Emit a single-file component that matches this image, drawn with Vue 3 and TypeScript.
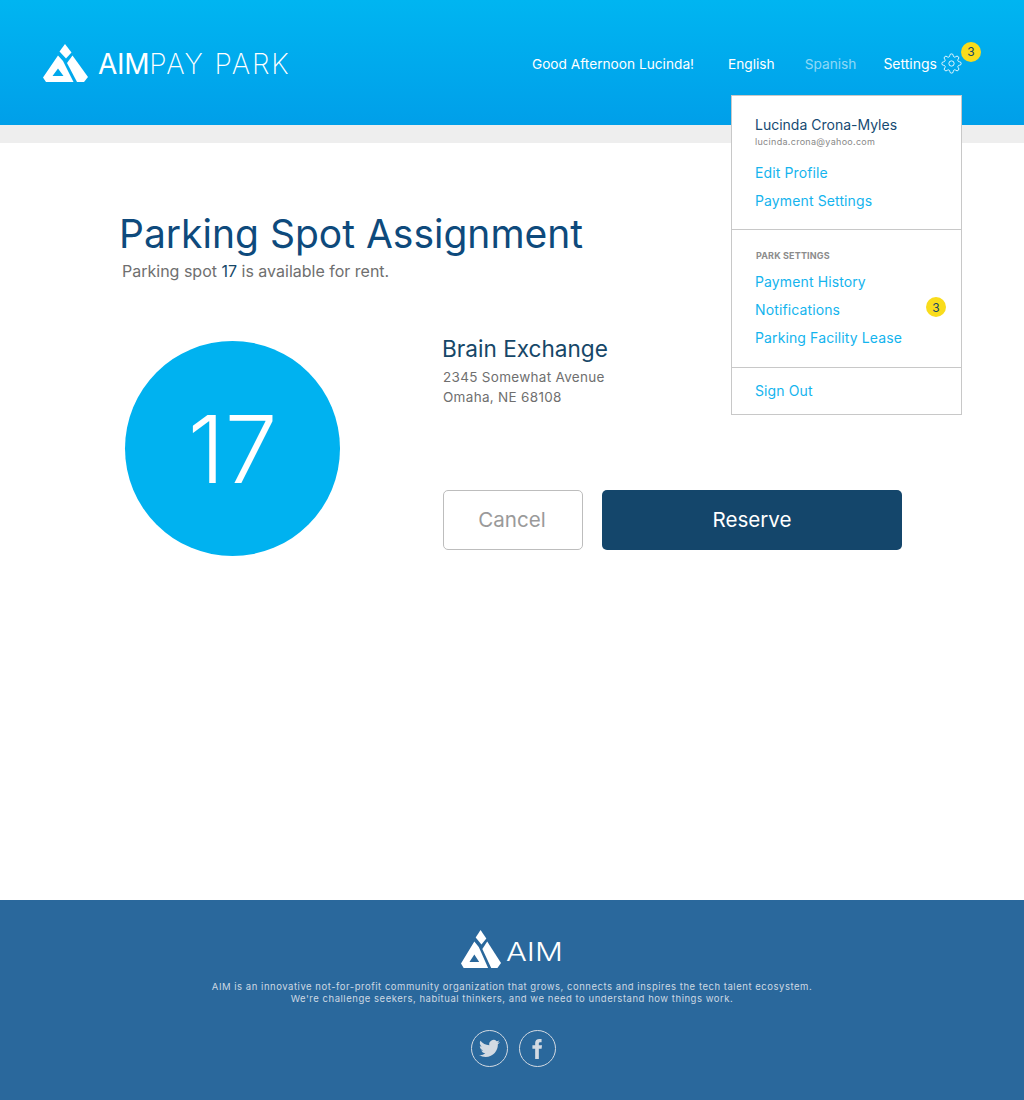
<template>
  <div class="page">
    <header class="topbar">
      <div class="brand">
        <svg class="mark" viewBox="0 0 45 38" width="45" height="38">
          <path fill="#fff" d="M22 0 28.500 8.500 23 14.500 16.500 7.500Z" />
          <path fill="#fff" d="M29.500 11.500 45 33 41 38 34 38 24 19Z" />
          <path fill="#fff" fill-rule="evenodd" d="M15 11.500 20 17 30.500 38 3 38 0 33.500ZM15 24.500 9.500 32 20.500 32Z" />
        </svg>
        <span class="brand-name"><b>AIM</b>PAY PARK</span>
      </div>
      <nav class="nav">
        <span class="greeting">Good Afternoon Lucinda!</span>
        <a class="lang">English</a>
        <a class="lang muted">Spanish</a>
        <a class="settings">
          Settings
          <svg class="gear" viewBox="0 0 24 24" width="21" height="21" fill="none" stroke="#fff" stroke-width="1">
            <circle cx="12" cy="12" r="3" />
            <path d="M19.400 15a1.650 1.650 0 0 0 .33 1.820l.06.06a2 2 0 0 1 0 2.830 2 2 0 0 1-2.830 0l-.06-.06a1.650 1.650 0 0 0-1.820-.33 1.650 1.650 0 0 0-1 1.510V21a2 2 0 0 1-2 2 2 2 0 0 1-2-2v-.09A1.650 1.650 0 0 0 9 19.400a1.650 1.650 0 0 0-1.820.33l-.06.06a2 2 0 0 1-2.830 0 2 2 0 0 1 0-2.830l.06-.06a1.650 1.650 0 0 0 .33-1.820 1.650 1.650 0 0 0-1.510-1H3a2 2 0 0 1-2-2 2 2 0 0 1 2-2h.09A1.650 1.650 0 0 0 4.600 9a1.650 1.650 0 0 0-.33-1.820l-.06-.06a2 2 0 0 1 0-2.830 2 2 0 0 1 2.830 0l.06.06a1.650 1.650 0 0 0 1.820.33H9a1.650 1.650 0 0 0 1-1.510V3a2 2 0 0 1 2-2 2 2 0 0 1 2 2v.09a1.650 1.650 0 0 0 1 1.510 1.650 1.650 0 0 0 1.820-.33l.06-.06a2 2 0 0 1 2.830 0 2 2 0 0 1 0 2.830l-.06.06a1.650 1.650 0 0 0-.33 1.820V9a1.650 1.650 0 0 0 1.510 1H21a2 2 0 0 1 2 2 2 2 0 0 1-2 2h-.09a1.650 1.650 0 0 0-1.510 1z" />
          </svg>
          <span class="badge top-badge">{{ alertCount }}</span>
        </a>
      </nav>
      <div class="menu">
        <section class="menu-section first">
          <div class="menu-user">Lucinda Crona-Myles</div>
          <div class="menu-email">lucinda.crona@yahoo.com</div>
          <a class="menu-link edit">Edit Profile</a>
          <a class="menu-link">Payment Settings</a>
        </section>
        <section class="menu-section second">
          <div class="menu-head">PARK SETTINGS</div>
          <a class="menu-link">Payment History</a>
          <a class="menu-link with-badge">Notifications <span class="badge">{{ alertCount }}</span></a>
          <a class="menu-link">Parking Facility Lease</a>
        </section>
        <section class="menu-section third">
          <a class="menu-link">Sign Out</a>
        </section>
      </div>
    </header>
    <div class="strip"></div>

    <main class="content">
      <h1>Parking Spot Assignment</h1>
      <p class="lead">Parking spot <strong>{{ spot }}</strong> is available for rent.</p>
      <div class="detail">
        <div class="spot-circle">{{ spot }}</div>
        <div class="info">
          <h2>Brain Exchange</h2>
          <p class="address">2345 Somewhat Avenue<br />Omaha, NE 68108</p>
          <div class="actions">
            <button class="btn cancel" type="button">Cancel</button>
            <button class="btn reserve" type="button">Reserve</button>
          </div>
        </div>
      </div>
    </main>

    <footer class="footer">
      <div class="foot-brand">
        <svg viewBox="0 0 45 38" width="40" height="38" preserveAspectRatio="none">
          <path fill="#fff" d="M22 0 28.500 8.500 23 14.500 16.500 7.500Z" />
          <path fill="#fff" d="M29.500 11.500 45 33 41 38 34 38 24 19Z" />
          <path fill="#fff" fill-rule="evenodd" d="M15 11.500 20 17 30.500 38 3 38 0 33.500ZM15 24.500 9.500 32 20.500 32Z" />
        </svg>
        <span>AIM</span>
      </div>
      <p class="blurb">
        AIM is an innovative not-for-profit community organization that grows, connects and inspires the tech talent ecosystem.<br />
        We're challenge seekers, habitual thinkers, and we need to understand how things work.
      </p>
      <div class="social">
        <a class="social-btn">
          <svg viewBox="0 0 24 24" width="21" height="21" fill="#d3dae2">
            <path d="M23.953 4.570a10 10 0 01-2.825.775 4.958 4.958 0 002.163-2.723c-.951.555-2.005.959-3.127 1.184a4.920 4.920 0 00-8.384 4.482C7.690 8.095 4.067 6.130 1.640 3.162a4.822 4.822 0 00-.666 2.475c0 1.710.870 3.213 2.188 4.096a4.904 4.904 0 01-2.228-.616v.060a4.923 4.923 0 003.946 4.827 4.996 4.996 0 01-2.212.085 4.936 4.936 0 004.604 3.417 9.867 9.867 0 01-6.102 2.105c-.390 0-.779-.023-1.170-.067a13.995 13.995 0 007.557 2.209c9.053 0 13.998-7.496 13.998-13.985 0-.210 0-.420-.015-.630A9.935 9.935 0 0024 4.590z" />
          </svg>
        </a>
        <a class="social-btn">
          <svg viewBox="0 0 24 24" width="22" height="22" fill="#d3dae2">
            <path d="M14 8V6c0-.9.3-1.500 1.600-1.500H17V1.100C16.700 1 15.600 1 14.400 1 11.800 1 10 2.600 10 5.500V8H7v3.600h3V23h4V11.600h3l.5-3.600z" />
          </svg>
        </a>
      </div>
    </footer>
  </div>
</template>

<script setup lang="ts">
const spot: number = 17
const alertCount: number = 3
</script>

<style scoped>
.page {
  width: 1024px;
  height: 1100px;
  display: flex;
  flex-direction: column;
  font-family: Inter, "Liberation Sans", sans-serif;
  background: #fff;
  overflow: hidden;
}

.topbar {
  position: relative;
  height: 125px;
  flex: none;
  display: flex;
  align-items: center;
  justify-content: space-between;
  padding: 1px 62px 0 43px;
  box-sizing: border-box;
  background: linear-gradient(180deg, #00b5f1 0%, #009fe9 100%);
  color: #fff;
}

.brand {
  display: flex;
  align-items: center;
  gap: 10px;
}

.brand-name {
  font-size: 28px;
  font-weight: 200;
  letter-spacing: 1.9px;
  white-space: nowrap;
  padding-top: 2px;
}

.brand-name b {
  font-weight: 400;
  letter-spacing: -0.3px;
}

.nav {
  display: flex;
  align-items: center;
  font-size: 13.7px;
  white-space: nowrap;
}

.greeting {
  margin-right: 34px;
  padding-top: 2px;
}

.lang {
  margin-right: 30px;
  padding-top: 2px;
}

.lang.muted {
  margin-right: 27px;
  opacity: 0.55;
}

.settings {
  position: relative;
  display: flex;
  align-items: center;
  gap: 4px;
  font-size: 14px;
}

.badge {
  display: flex;
  align-items: center;
  justify-content: center;
  width: 20px;
  height: 20px;
  border-radius: 50%;
  background: #f9dc1c;
  color: #164768;
  font-size: 12px;
}

.top-badge {
  position: absolute;
  top: -11px;
  right: -19px;
}

.menu {
  position: absolute;
  top: 95px;
  left: 731px;
  width: 231px;
  height: 320px;
  box-sizing: border-box;
  background: #fff;
  border: 1px solid #c8c8c8;
  display: flex;
  flex-direction: column;
  z-index: 2;
}

.menu-section {
  padding-left: 23px;
  padding-right: 15px;
  box-sizing: border-box;
  border-bottom: 1px solid #c8c8c8;
}

.menu-section.first {
  height: 134px;
  padding-top: 19px;
}

.menu-section.second {
  height: 138px;
  padding-top: 20px;
}

.menu-section.third {
  height: 46px;
  border-bottom: none;
  padding-top: 8px;
}

.menu-user {
  font-size: 14px;
  line-height: 20px;
  color: #164a72;
}

.menu-email {
  font-size: 9px;
  line-height: 12px;
  letter-spacing: 0.3px;
  color: #888;
  margin-top: 1px;
}

.menu-head {
  font-size: 9px;
  line-height: 12px;
  font-weight: 700;
  letter-spacing: 0.15px;
  color: #8c8c8c;
  margin-bottom: 5px;
  padding-left: 1px;
}

.menu-link {
  display: flex;
  align-items: center;
  justify-content: space-between;
  height: 28px;
  font-size: 14px;
  letter-spacing: 0.12px;
  color: #14b4ee;
}

.menu-link.edit {
  margin-top: 10px;
}

.with-badge .badge {
  margin-bottom: 4px;
}

.strip {
  height: 18px;
  flex: none;
  background: #eee;
}

.content {
  flex: 1;
  padding: 66px 0 0 120px;
}

h1 {
  margin: 0 0 0 -1px;
  font-size: 39px;
  line-height: 50px;
  font-weight: 400;
  color: #0e4a7c;
}

.lead {
  margin: 2px 0 0 2px;
  font-size: 16px;
  line-height: 20px;
  color: #6f6f6f;
}

.lead strong {
  font-weight: 400;
  color: #164768;
}

.detail {
  display: flex;
  margin-top: 60px;
  padding-left: 5px;
}

.spot-circle {
  width: 215px;
  height: 215px;
  flex: none;
  border-radius: 50%;
  background: #00b2f0;
  color: #fff;
  font-size: 94px;
  font-weight: 300;
  display: flex;
  align-items: center;
  justify-content: center;
}

.info {
  margin-left: 102px;
}

h2 {
  margin: -7px 0 0;
  font-size: 22.6px;
  line-height: 30px;
  font-weight: 400;
  color: #164768;
}

.address {
  margin: 3px 0 0 1px;
  font-size: 13.5px;
  line-height: 20px;
  letter-spacing: 0.3px;
  color: #6f6f6f;
}

.actions {
  display: flex;
  margin: 83px 0 0 1px;
  gap: 19px;
}

.btn {
  height: 60px;
  border-radius: 5px;
  font-family: inherit;
  font-size: 20.6px;
  padding: 0 0 2px;
  box-sizing: border-box;
}

.cancel {
  width: 140px;
  background: #fff;
  border: 1.5px solid #bdbdbd;
  color: #9a9a9a;
  padding-right: 2px;
}

.reserve {
  width: 300px;
  background: #14466b;
  border: none;
  color: #fff;
}

.footer {
  height: 200px;
  flex: none;
  background: #2a689c;
  display: flex;
  flex-direction: column;
  align-items: center;
  padding-top: 30px;
  box-sizing: border-box;
}

.foot-brand {
  display: flex;
  align-items: center;
  gap: 5px;
  color: #fff;
  height: 38px;
}

.foot-brand span {
  display: inline-block;
  font-size: 25px;
  font-weight: 300;
  margin-top: 6px;
  margin-right: 11px;
  transform: scaleX(1.24);
  transform-origin: left center;
}

.blurb {
  margin: 13px 0 0;
  text-align: center;
  font-size: 9.5px;
  line-height: 12px;
  letter-spacing: 0.53px;
  color: #cdd8e3;
}

.social {
  display: flex;
  gap: 11px;
  margin-top: 25px;
  padding-left: 2px;
}

.social-btn {
  width: 37px;
  height: 37px;
  box-sizing: border-box;
  border: 1.5px solid #d3dae2;
  border-radius: 50%;
  display: flex;
  align-items: center;
  justify-content: center;
}
</style>
